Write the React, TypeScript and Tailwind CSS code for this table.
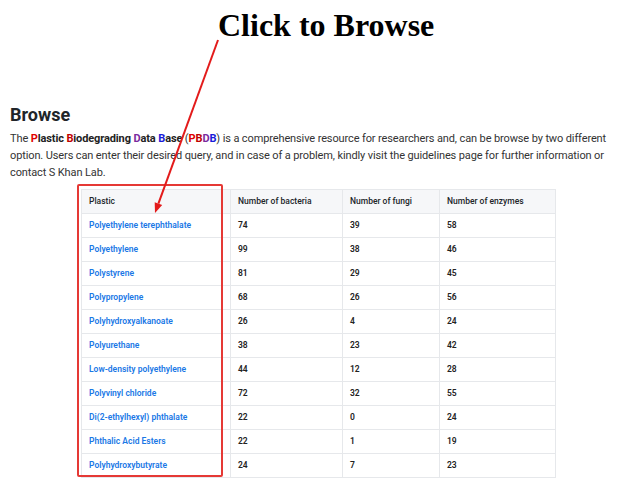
import React from 'react'

const rows: [string, number, number, number][] = [
  ['Polyethylene terephthalate', 74, 39, 58],
  ['Polyethylene', 99, 38, 46],
  ['Polystyrene', 81, 29, 45],
  ['Polypropylene', 68, 26, 56],
  ['Polyhydroxyalkanoate', 26, 4, 24],
  ['Polyurethane', 38, 23, 42],
  ['Low-density polyethylene', 44, 12, 28],
  ['Polyvinyl chloride', 72, 32, 55],
  ['Di(2-ethylhexyl) phthalate', 22, 0, 24],
  ['Phthalic Acid Esters', 22, 1, 19],
  ['Polyhydroxybutyrate', 24, 7, 23],
]

function App() {
  return (
    <div className="relative w-[624px] h-[487px] overflow-hidden bg-white font-['Roboto',sans-serif]">
      <div className="pt-[9px] pl-[218px]">
        <h1 className="font-['Liberation_Serif',serif] text-[32px] leading-[32px] font-bold text-black">
          Click to Browse
        </h1>
      </div>

      <div className="px-[10px] pt-[63px]">
        <h2 className="text-[18px] leading-[22px] font-bold text-[#212529]">Browse</h2>
        <p className="mt-[4px] whitespace-nowrap text-[11px] leading-[17px] tracking-[-0.12px] text-[#333]">
          The <b className="text-[#e00000]">P</b><b className="text-[#222]">lastic</b>{' '}
          <b className="text-[#c00000]">B</b><b className="text-[#222]">iodegrading</b>{' '}
          <b className="text-[#7b2a9e]">D</b><b className="text-[#222]">ata</b>{' '}
          <b className="text-[#1a1ad8]">B</b><b className="text-[#222]">ase</b> (
          <b className="text-[#e00000]">P</b><b className="text-[#c00000]">B</b>
          <b className="text-[#7b2a9e]">D</b><b className="text-[#1a1ad8]">B</b>) is a comprehensive
          resource for researchers and, can be browse by two different
          <br />
          option. Users can enter their desired query, and in case of a problem, kindly visit the
          guidelines page for further information or
          <br />
          contact S Khan Lab.
        </p>
      </div>

      <div className="relative ml-[81px] mt-[8px] w-[474px]">
        <table className="w-[474px] table-fixed border-collapse border border-[#e6e8eb] text-[8.5px]">
          <thead>
            <tr className="h-[24px] bg-[#f6f7f9] text-[#212529]">
              <th className="w-[149px] border border-[#e6e8eb] px-[7px] text-left font-medium">Plastic</th>
              <th className="w-[112px] border border-[#e6e8eb] px-[7px] text-left font-medium">Number of bacteria</th>
              <th className="w-[97px] border border-[#e6e8eb] px-[7px] text-left font-medium">Number of fungi</th>
              <th className="w-[116px] border border-[#e6e8eb] px-[7px] text-left font-medium">Number of enzymes</th>
            </tr>
          </thead>
          <tbody>
            {rows.map(([name, b, f, e]) => (
              <tr key={name} className="h-[24px] font-semibold text-[#222]">
                <td className="border border-[#e6e8eb] px-[7px]">
                  <a href="#" className="text-[#1a78e6]">{name}</a>
                </td>
                <td className="border border-[#e6e8eb] px-[7px]">{b}</td>
                <td className="border border-[#e6e8eb] px-[7px]">{f}</td>
                <td className="border border-[#e6e8eb] px-[7px]">{e}</td>
              </tr>
            ))}
          </tbody>
        </table>
        <div className="pointer-events-none absolute left-[-4px] top-[-5px] h-[293px] w-[146px] rounded-[2px] border-2 border-[#e53935]" />
      </div>

      <svg className="pointer-events-none absolute inset-0" width="624" height="487">
        <line x1="218" y1="40" x2="158.4" y2="203.6" stroke="#e31b1b" strokeWidth="2" />
        <polygon points="155,213 162.2,205 154.7,202.2" fill="#e31b1b" />
      </svg>
    </div>
  )
}

export default App
